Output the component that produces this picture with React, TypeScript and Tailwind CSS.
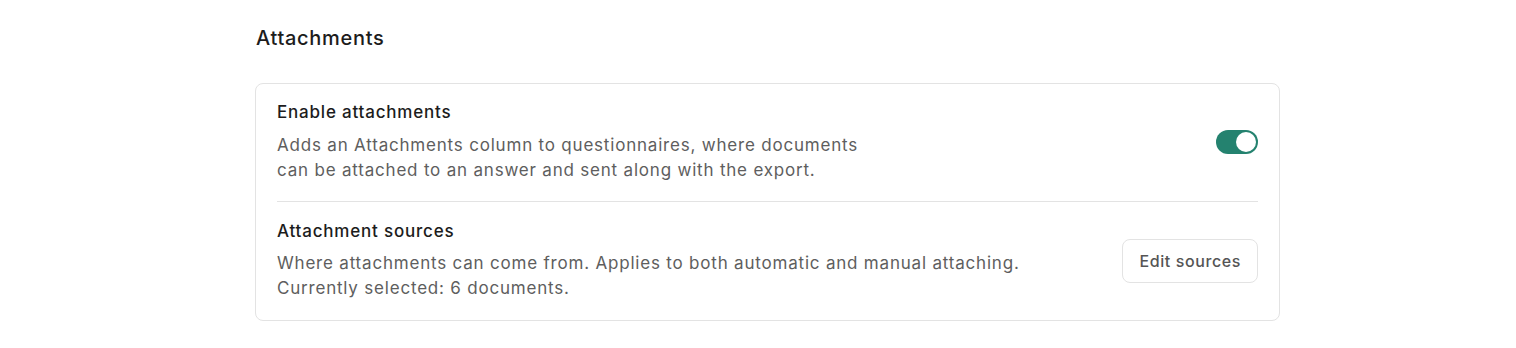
import React, { useState } from "react";

export default function App() {
  const [enabled, setEnabled] = useState(true);

  return (
    <div className="min-h-screen bg-white font-['Inter',sans-serif] pl-[255px] pr-[236px] pt-[26px]">
      <h2 className="text-[20px] leading-6 font-medium tracking-[0.7px] text-[#1c1c1c] pl-px">Attachments</h2>

      <div className="mt-[33px] border border-[#e3e3e3] rounded-lg px-[21px]">
        <div className="flex items-center justify-between pt-4 pb-[18px] border-b border-[#e3e3e3]">
          <div>
            <div className="text-[17px] leading-6 font-medium tracking-[0.8px] text-[#1c1c1c]">Enable attachments</div>
            <p className="mt-[9px] text-[17px] leading-[25px] tracking-[0.8px] text-[#5e5e5e]">
              Adds an Attachments column to questionnaires, where documents
              <br />
              can be attached to an answer and sent along with the export.
            </p>
          </div>
          <button
            onClick={() => setEnabled(!enabled)}
            className={`w-[42px] h-6 rounded-full p-[2px] flex items-center ${
              enabled ? "bg-[#24826f] justify-end" : "bg-[#d4d4d4] justify-start"
            }`}
          >
            <span className="w-5 h-5 rounded-full bg-white" />
          </button>
        </div>

        <div className="flex items-center justify-between pt-[17px] pb-[19px]">
          <div>
            <div className="text-[17px] leading-6 font-medium tracking-[0.8px] text-[#1c1c1c]">Attachment sources</div>
            <p className="mt-[8px] text-[17px] leading-[25px] tracking-[0.8px] text-[#5e5e5e]">
              Where attachments can come from. Applies to both automatic and manual attaching.
              <br />
              Currently selected: 6 documents.
            </p>
          </div>
          <button className="h-11 px-4 mt-[2px] rounded-lg border border-[#e3e3e3] bg-white text-[16px] font-medium tracking-[0.6px] text-[#555]">
            Edit sources
          </button>
        </div>
      </div>
    </div>
  );
}
